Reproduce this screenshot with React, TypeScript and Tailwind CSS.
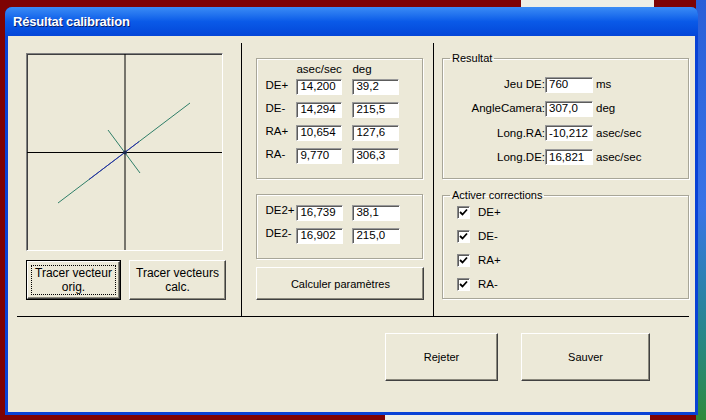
import React from "react";

const font = { fontFamily: '"Liberation Sans", Arial, sans-serif' };

function Field({ value, w = "w-[46px]", low = false }: { value: string; w?: string; low?: boolean }) {
  return (
    <div
      className={`${w} h-[16px] bg-white border border-t-[#9a9a9a] border-l-[#9a9a9a] border-b-white border-r-white shadow-[inset_1px_1px_0_#5c5c5c] pl-[3px] text-[11.5px] leading-none text-black flex ${low ? "items-end pb-[1px]" : "items-center"}`}
    >
      {value}
    </div>
  );
}

function Button({
  children,
  className = "",
  focused = false,
  text = "text-[11px]",
}: {
  children: React.ReactNode;
  className?: string;
  focused?: boolean;
  text?: string;
}) {
  return (
    <div className={`${focused ? "border border-black" : ""} ${className}`}>
      <div
        className={`w-full h-full bg-[#ECE9D8] border border-t-white border-l-white border-b-[#404040] border-r-[#404040] shadow-[inset_-1px_-1px_0_#8a887c] flex items-center justify-center text-center ${text} leading-[14px] text-black`}
      >
        {focused ? (
          <div className="w-[calc(100%-6px)] h-[calc(100%-6px)] border border-dotted border-black flex items-center justify-center">
            {children}
          </div>
        ) : (
          children
        )}
      </div>
    </div>
  );
}

function Group({ legend, className = "", children }: { legend?: string; className?: string; children: React.ReactNode }) {
  return (
    <fieldset className={`relative border border-[#a8a698] shadow-[inset_1px_1px_0_#fff,1px_1px_0_#fff] ${className}`}>
      {legend && (
        <legend className="ml-[7px] px-[2px] text-[11px] leading-[12px] text-black">{legend}</legend>
      )}
      {children}
    </fieldset>
  );
}

function Check({ label }: { label: string }) {
  return (
    <div className="flex items-center gap-[8px] h-[13px]">
      <div className="w-[13px] h-[13px] bg-white border border-t-[#8a8a8a] border-l-[#8a8a8a] border-b-white border-r-white shadow-[inset_1px_1px_0_#5c5c5c] flex items-center justify-center">
        <svg width="9" height="9" viewBox="0 0 9 9">
          <path d="M1 4 L3.5 6.5 L8 1.5" stroke="#000" strokeWidth="1.8" fill="none" />
        </svg>
      </div>
      <span className="text-[11.5px] text-black">{label}</span>
    </div>
  );
}

export default function App() {
  const rows = [
    ["DE+", "14,200", "39,2"],
    ["DE-", "14,294", "215,5"],
    ["RA+", "10,654", "127,6"],
    ["RA-", "9,770", "306,3"],
  ];
  const rows2 = [
    ["DE2+", "16,739", "38,1"],
    ["DE2-", "16,902", "215,0"],
  ];
  const results = [
    ["Jeu DE:", "760", "ms"],
    ["AngleCamera:", "307,0", "deg"],
    ["Long.RA:", "-10,212", "asec/sec"],
    ["Long.DE:", "16,821", "asec/sec"],
  ];

  return (
    <div className="relative w-[706px] h-[420px] overflow-hidden bg-[#7e0303]" style={font}>
      {/* desktop behind */}
      <div className="absolute left-[521px] top-0 w-[133px] h-[9px] bg-[#eeeee6]" />
      <div className="absolute right-0 top-0 w-[10px] h-[420px] bg-gradient-to-b from-[#2a5fd8] via-[#3a73e6] to-[#2f8a3a]" />
      <div className="absolute left-[385px] bottom-0 w-[265px] h-[5px] bg-[#eeeee6]" />

      {/* window */}
      <div className="absolute left-[5px] top-[7px] w-[693px] h-[408px] rounded-t-[7px] bg-[#0842d6] p-[3px] pt-0 flex flex-col">
        <div className="h-[29px] -mx-[3px] rounded-t-[7px] bg-gradient-to-b from-[#3b8cf5] via-[#0a5ae8] to-[#0546d8] flex items-center pl-[8px]">
          <span className="text-white font-bold text-[13px] tracking-[-0.2px] [text-shadow:1px_1px_0_#0a1f6a]">
            Résultat calibration
          </span>
        </div>
        <div className="flex-1 bg-[#ECE9D8] flex flex-col">
          {/* top area */}
          <div className="ml-[9px] mt-[7px] w-[672px] h-[274px] border-b border-black flex">
            {/* left column */}
            <div className="w-[226px] border-r border-black pl-[9px] pt-[10px] flex flex-col">
              <div className="w-[197px] h-[198px] border border-t-[#808080] border-l-[#808080] border-b-white border-r-white shadow-[inset_1px_1px_0_#404040]">
                <svg width="195" height="196" viewBox="0 0 195 196">
                  <line x1="98" y1="0" x2="98" y2="196" stroke="#000" strokeWidth="1" />
                  <line x1="0" y1="98.5" x2="195" y2="98.5" stroke="#000" strokeWidth="1" />
                  <line x1="31" y1="149" x2="163" y2="49" stroke="#2f7f68" strokeWidth="1" />
                  <line x1="62" y1="125.5" x2="112" y2="87.6" stroke="#2828b0" strokeWidth="1" />
                  <line x1="81" y1="76" x2="113" y2="119" stroke="#2f7f68" strokeWidth="1" />
                  <circle cx="98" cy="98.5" r="2" fill="#1a2a50" />
                </svg>
              </div>
              <div className="flex gap-[8px] mt-[9px]">
                <Button focused className="w-[95px] h-[40px]" text="text-[12px]">
                  Tracer vecteur
                  <br />
                  orig.
                </Button>
                <Button className="w-[97px] h-[40px]" text="text-[12px]">
                  Tracer vecteurs
                  <br />
                  calc.
                </Button>
              </div>
            </div>

            {/* middle column */}
            <div className="w-[192px] border-r border-black pl-[14px] pt-[15px] flex flex-col">
              <Group className="w-[167px] h-[121px]">
                <div className="pl-[8px] pt-[3px] text-[11.5px] text-black">
                  <div className="flex h-[16px] items-center">
                    <span className="ml-[31px] w-[56px]">asec/sec</span>
                    <span>deg</span>
                  </div>
                  <div className="flex flex-col gap-[7px] mt-[1px]">
                    {rows.map(([l, a, b]) => (
                      <div key={l} className="flex items-center">
                        <span className="w-[31px] -mt-[3px]">{l}</span>
                        <Field value={a} />
                        <div className="w-[10px]" />
                        <Field value={b} w="w-[47px]" />
                      </div>
                    ))}
                  </div>
                </div>
              </Group>
              <Group className="w-[167px] h-[65px] mt-[15px]">
                <div className="pl-[8px] pt-[10px] flex flex-col gap-[7px] text-[11.5px] text-black">
                  {rows2.map(([l, a, b]) => (
                    <div key={l} className="flex items-center">
                      <span className="w-[31px] -mt-[4px]">{l}</span>
                      <Field value={a} w="w-[47px]" />
                      <div className="w-[9px]" />
                      <Field value={b} w="w-[48px]" />
                    </div>
                  ))}
                </div>
              </Group>
              <Button className="w-[168px] h-[33px] mt-[8px]">Calculer paramètres</Button>
            </div>

            {/* right column */}
            <div className="flex-1 pl-[8px] pt-[9px] flex flex-col">
              <Group legend="Resultat" className="w-[247px] h-[127px]">
                <div className="flex flex-col gap-[7px] pt-[12px] text-[11.5px] text-black">
                  {results.map(([l, v, u]) => (
                    <div key={l} className="flex items-center">
                      <span className="w-[102px] text-right">{l}</span>
                      <Field value={v} w="w-[48px]" low />
                      <span className="ml-[3px]">{u}</span>
                    </div>
                  ))}
                </div>
              </Group>
              <Group legend="Activer corrections" className="w-[247px] h-[110px] mt-[10px]">
                <div className="flex flex-col gap-[11px] pl-[14px] pt-[5px]">
                  <Check label="DE+" />
                  <Check label="DE-" />
                  <Check label="RA+" />
                  <Check label="RA-" />
                </div>
              </Group>
            </div>
          </div>

          {/* bottom buttons */}
          <div className="flex justify-end gap-[23px] pr-[45px] mt-[16px]">
            <Button className="w-[113px] h-[48px]">Rejeter</Button>
            <Button className="w-[129px] h-[48px]">Sauver</Button>
          </div>
        </div>
      </div>
    </div>
  );
}
